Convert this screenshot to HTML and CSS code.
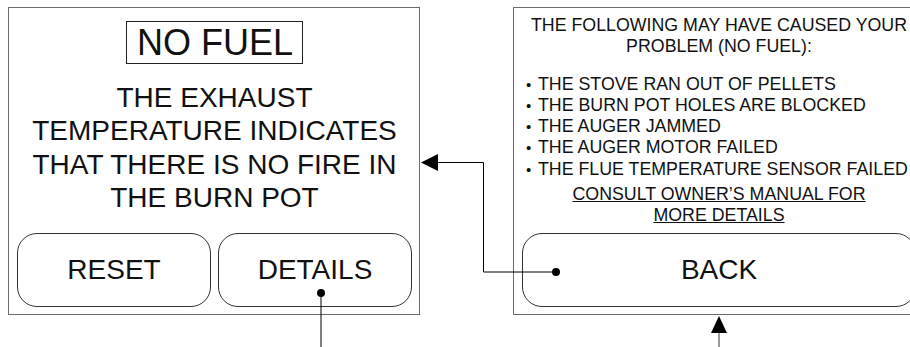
FILE: index.html
```html
<!DOCTYPE html>
<html lang="en">
<head>
    <meta charset="UTF-8">
    <meta name="viewport" content="width=device-width, initial-scale=1.0">
    <title>No Fuel</title>
    <link rel="stylesheet" href="styles.css">
</head>
<body>
    <div class="screens">
        <div class="screen">
            <div class="title">NO FUEL</div>
            <p class="message">THE EXHAUST TEMPERATURE INDICATES THAT THERE IS NO FIRE IN THE BURN POT</p>
            <div class="buttons">
                <button class="btn">RESET</button>
                <button class="btn">DETAILS</button>
            </div>
        </div>

        <div class="screen details">
            <p class="intro">THE FOLLOWING MAY HAVE CAUSED YOUR<br>PROBLEM (NO FUEL):</p>
            <ul class="causes">
                <li>THE STOVE RAN OUT OF PELLETS</li>
                <li>THE BURN POT HOLES ARE BLOCKED</li>
                <li>THE AUGER JAMMED</li>
                <li>THE AUGER MOTOR FAILED</li>
                <li>THE FLUE TEMPERATURE SENSOR FAILED</li>
            </ul>
            <p class="manual">CONSULT OWNER’S MANUAL FOR<br>MORE DETAILS</p>
            <div class="buttons">
                <button class="btn">BACK</button>
            </div>
        </div>
    </div>

    <!-- connector lines between the screens -->
    <svg class="links" width="910" height="347" viewBox="0 0 910 347">
        <circle cx="321" cy="293" r="4" fill="#000"/>
        <line x1="321" y1="293" x2="321" y2="347" stroke="#000" stroke-width="1"/>

        <circle cx="556" cy="272" r="4" fill="#000"/>
        <polyline points="556,272 483.5,272 483.5,162.5 436,162.5" fill="none" stroke="#000" stroke-width="1"/>
        <polygon points="421,162.5 438,154 438,171" fill="#000"/>

        <line x1="719" y1="330" x2="719" y2="347" stroke="#777" stroke-width="1.5"/>
        <polygon points="719,316 711,333 727,333" fill="#000"/>
    </svg>
</body>
</html>
```

FILE: styles.css
```css
body {
    margin: 0;
    width: 910px;
    height: 347px;
    overflow: hidden;
    position: relative;
    background-color: #fff;
    font-family: "Liberation Sans", Arial, sans-serif;
    color: #111;
}
.screens {
    display: flex;
    gap: 93px;
    padding: 7px 0 0 8px;
}
.screen {
    box-sizing: border-box;
    flex: none;
    width: 412px;
    min-width: 0;
    height: 308px;
    border: 1px solid #6b6b6b;
    display: flex;
    flex-direction: column;
    align-items: center;
    padding: 0 7px 7px 8px;
}
.title {
    margin-top: 13px;
    border: 1px solid #222;
    font-size: 36px;
    line-height: 41px;
    padding: 0 9px 0 10px;
}
.message {
    margin: 17px 0 0;
    font-size: 28px;
    line-height: 33.3px;
    text-align: center;
    width: 100%;
}
.buttons {
    margin-top: auto;
    display: flex;
    gap: 7px;
    width: 100%;
}
.btn {
    flex: 1;
    height: 74px;
    border: 1px solid #333;
    border-radius: 20px;
    background-color: #fff;
    font-family: "Liberation Sans", Arial, sans-serif;
    font-size: 28px;
    color: #111;
    padding: 0;
}
.details {
    padding-right: 8px;
}
.intro {
    margin: 7px 0 0;
    font-size: 17.8px;
    line-height: 21.3px;
    text-align: center;
}
.causes {
    align-self: stretch;
    list-style: none;
    margin: 16px 0 0;
    padding: 0 0 0 4px;
    font-size: 17.8px;
    line-height: 21.3px;
    white-space: nowrap;
}
.causes li::before {
    content: "•";
    display: inline-block;
    width: 12px;
    font-size: 15px;
}
.manual {
    margin: 4px 0 0;
    font-size: 17.8px;
    line-height: 21.3px;
    text-align: center;
    text-decoration: underline;
}
.links {
    position: absolute;
    left: 0;
    top: 0;
    pointer-events: none;
}
```
